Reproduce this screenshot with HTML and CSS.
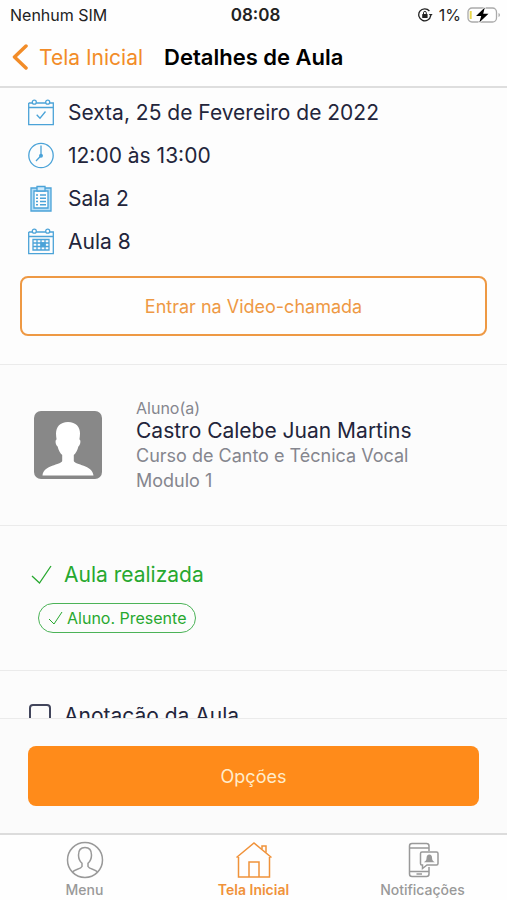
FILE: index.html
```html
<!DOCTYPE html>
<html lang="pt-BR">
<head>
<meta charset="utf-8">
<meta name="viewport" content="width=device-width, initial-scale=1">
<title>Detalhes de Aula</title>
<link rel="stylesheet" href="styles.css">
</head>
<body>
<div class="status">
  <span class="status-carrier">Nenhum SIM</span>
  <span class="status-time">08:08</span>
  <span class="status-right">
    <svg width="15" height="14" viewBox="0 0 15 14" fill="none" stroke="#222" stroke-width="1.3"><path d="M11.4 3A6 6 0 1 0 12.7 7.6"/><path d="M10.8 6h3.8l-1.9 2.6z" fill="#222" stroke="none"/><rect x="4.2" y="6" width="5.4" height="4" rx=".6" fill="#222" stroke="none"/><path d="M5.5 6V4.8a1.4 1.4 0 0 1 2.8 0V6" stroke-width="1"/></svg>
    <span>1%</span>
    <svg width="34" height="16" viewBox="0 0 34 16"><rect x="1" y="1" width="28.500" height="14" rx="4" fill="#fff" stroke="#aaa" stroke-width="1.300"/><path d="M3.700 4v8" stroke="#e8d74a" stroke-width="2"/><path d="M31.500 6v4q1.500-.5 1.500-2t-1.500-2z" fill="#aaa"/><path d="M17.800.5L9 9h5.200L12.300 15.500 21.500 6.800H16.200z" fill="#000" stroke="#fff" stroke-width="1.600" paint-order="stroke"/></svg>
  </span>
</div>
<header class="nav">
  <a class="back" href="#inicio">
    <svg width="16" height="26" viewBox="0 0 16 26" fill="none" stroke="currentColor" stroke-width="3.500" stroke-linecap="round" stroke-linejoin="round"><path d="M14 2L2.500 13l11.500 11"/></svg>
    Tela Inicial
  </a>
  <h1>Detalhes de Aula</h1>
</header>
<main>
  <section class="lesson">
    <ul class="facts">
      <li><svg class="fact-icon" viewBox="0 0 26 27"><path d="M.7 4h3.600M8.300 4h9.400M21.700 4h3.600v21.700H.7V4M1 8.500h24"/><circle cx="6.300" cy="3.200" r="2"/><circle cx="19.700" cy="3.200" r="2"/><path d="M8.700 15.700l3.300 3.500 5.500-6.700"/></svg>Sexta, 25 de Fevereiro de 2022</li>
      <li><svg class="fact-icon" viewBox="0 0 26 27"><circle cx="13" cy="13.500" r="12.200"/><path d="M13 3.500v10.200L8 19"/><circle cx="13" cy="13.700" r="1.300" fill="currentColor"/></svg>12:00 às 13:00</li>
      <li><svg class="fact-icon" viewBox="0 0 26 27"><path d="M3 3h20v23H3z" fill="#b5dff8"/><path d="M6 6h14v17H6z" fill="#fdfdfd"/><path d="M9 1.500h8v4.500H9z" fill="#cdeafc"/><path d="M8 10h2m2 0h6M8 13.200h2m2 0h6M8 16.500h2m2 0h6M8 19.800h2m2 0h6" stroke-width="1.400"/></svg>Sala 2</li>
      <li><svg class="fact-icon" viewBox="0 0 26 27"><path d="M.7 4h3.600M8.300 4h9.400M21.700 4h3.600v21.700H.7V4M1 8.500h24"/><circle cx="6.300" cy="3.200" r="2"/><circle cx="19.700" cy="3.200" r="2"/><path d="M5 11.500h16v10.500H5zM5 15h16M5 18.500h16M9 11.500V22M13 11.500V22M17 11.500V22"/><path d="M13 15h4v3.500h-4z" fill="currentColor"/></svg>Aula 8</li>
    </ul>
    <button class="btn btn-outline" type="button">Entrar na Video-chamada</button>
  </section>
  <section class="student">
    <svg class="avatar" viewBox="0 0 68 68" role="img" aria-label="Foto do aluno"><rect width="68" height="68" rx="7" fill="#888"/><path d="M34 11c-8 0-12 5-12 11.500 0 2 .3 4 .6 6-1.700.2-1.200 5.500 1 7 1 4 2.500 6.500 4.600 8.500v6C27 54 9.500 54 8.500 64.500h51C58.500 54 41 54 39.800 50v-6c2.100-2 3.600-4.500 4.600-8.500 2.200-1.500 2.700-6.800 1-7 .3-2 .6-4 .6-6C46 16 42 11 34 11z" fill="#fff"/></svg>
    <div class="student-text">
      <p class="role">Aluno(a)</p>
      <p class="name">Castro Calebe Juan Martins</p>
      <p class="course">Curso de Canto e Técnica Vocal</p>
      <p class="course">Modulo 1</p>
    </div>
  </section>
  <section class="result">
    <p class="done"><svg width="21" height="19" viewBox="0 0 21 19" fill="none" stroke="currentColor" stroke-width="1.300"><path d="M1 11l7.500 7L20 1"/></svg>Aula realizada</p>
    <span class="chip"><svg width="15" height="14" viewBox="0 0 15 14" fill="none" stroke="currentColor"><path d="M1 8l5 5 8-12"/></svg>Aluno. Presente</span>
  </section>
  <section class="notes">
    <label><input type="checkbox">Anotação da Aula</label>
  </section>
</main>
<div class="actions"><button class="btn btn-solid" type="button">Opções</button></div>
<nav class="tabs">
  <a href="#menu"><svg width="38" height="38" viewBox="0 0 38 38"><circle cx="19" cy="19" r="17.500"/><path d="M6.500 31c2.500-3 8-2.500 9.500-5.500v-3.200c-2-1.800-3.500-4.800-3.500-8.300C12.500 9 15 6.500 19 6.500s6.500 2.500 6.500 7.500c0 3.500-1.500 6.500-3.500 8.300v3.200c1.500 3 7 2.500 9.500 5.500"/></svg>Menu</a>
  <a class="active" href="#inicio"><svg width="38" height="38" viewBox="0 0 38 38"><path d="M3.500 16V36h31V16M1.500 16.500L19 2l17.500 14.500"/><path d="M14 36V21h10v15M27 8V5h4v6.500"/></svg>Tela Inicial</a>
  <a href="#notificacoes"><svg width="38" height="38" viewBox="0 0 38 38"><path d="M25 10V5q0-2.500-2.500-2.500H8Q5.500 2.500 5.500 5v28q0 2.500 2.500 2.500h14.500Q25 35.500 25 33V26M5.500 7H25M5.500 30.500H25M12.500 33h5.500"/><path d="M18 11h14.500q1.500 0 1.500 1.500v10q0 1.500-1.500 1.500H23l-4.500 3.500V24h-.8q-1.200 0-1.200-1.500v-10Q16.500 11 18 11z"/><path d="M22 20.500q1.300-1 1.300-3.500 0-2.800 2-2.800t2 2.800q0 2.500 1.300 3.500z" fill="currentColor"/></svg>Notificações</a>
</nav>
</body>
</html>
```
FILE: styles.css
```css
* { box-sizing: border-box; margin: 0; padding: 0; }

body {
  display: flex;
  flex-direction: column;
  height: 100vh;
  font-family: Inter, "Liberation Sans", sans-serif;
  color: #23253b;
  background: #fcfcfc;
}

a { color: inherit; text-decoration: none; }
svg { flex: none; display: block; }

.status {
  display: grid;
  grid-template-columns: 1fr auto 1fr;
  align-items: center;
  height: 30px;
  padding: 0 6px 0 10px;
  font-size: 16px;
  color: #222;
  background: #fefefe;
}
.status-time { font-weight: 600; font-size: 17px; }
.status-right { display: flex; align-items: center; justify-content: flex-end; gap: 6px; }

.nav {
  display: flex;
  align-items: center;
  gap: 21px;
  height: 58px;
  padding: 0 12px 2px;
  background: #fefefe;
  border-bottom: 2px solid #dedede;
}
.back { display: flex; align-items: center; gap: 11px; font-size: 21px; color: #f28c28; }
h1 { font-size: 22px; font-weight: 600; color: #000; }

main { flex: 1; min-height: 0; overflow: hidden; }
section { border-bottom: 1px solid #ebebeb; }

.lesson { padding: 3px 20px 28px; background: #fdfdfd; }
.facts { list-style: none; margin-bottom: 13px; padding: 0 8px; }
.facts li { display: flex; align-items: center; gap: 14px; height: 43px; font-size: 21px; }
.fact-icon { width: 26px; height: 27px; fill: none; stroke: currentColor; stroke-width: 1.3; color: #4ba3d8; }

.btn { display: block; width: 100%; height: 60px; border-radius: 8px; font: inherit; font-size: 18px; }
.btn-outline { border: 2px solid #ee9944; color: #ee9944; background: #fefefe; }
.btn-solid { border: 0; color: #ffeccb; background: #ff8b1a; }

.student { display: flex; align-items: center; gap: 34px; padding: 32px 34px; }
.avatar { width: 68px; height: 68px; }
.role { font-size: 16px; line-height: 22px; color: #85868e; }
.name { font-size: 21px; line-height: 24px; }
.course { font-size: 18px; line-height: 25px; color: #85868e; }

.result { padding: 32px 31px 37px; color: #27a82f; }
.done { display: flex; align-items: center; gap: 12px; height: 32px; font-size: 21px; }
.chip {
  display: inline-flex;
  align-items: center;
  gap: 4px;
  height: 30px;
  margin: 13px 0 0 7px;
  padding: 0 9px;
  border: 1px solid #4bb357;
  border-radius: 15px;
  font-size: 16px;
  vertical-align: top;
}

.notes { padding: 28px 29px; }
.notes label { display: flex; align-items: center; gap: 13px; height: 32px; font-size: 21px; }
.notes input { appearance: none; width: 22px; height: 22px; border: 2px solid #42465c; border-radius: 4px; }

.actions { padding: 27px 28px; background: #fbfbfb; border-top: 1px solid #ebebeb; }

.tabs {
  display: grid;
  grid-template-columns: repeat(3, 1fr);
  height: 67px;
  padding-top: 6px;
  background: #fefefe;
  border-top: 2px solid #dcdcdc;
}
.tabs a {
  display: flex;
  flex-direction: column;
  align-items: center;
  gap: 3px;
  font-size: 14px;
  line-height: 16px;
  font-weight: 500;
  color: #999;
}
.tabs svg { fill: none; stroke: currentColor; stroke-width: 1.5; }
.tabs .active { color: #f0923a; font-weight: 600; }
```
